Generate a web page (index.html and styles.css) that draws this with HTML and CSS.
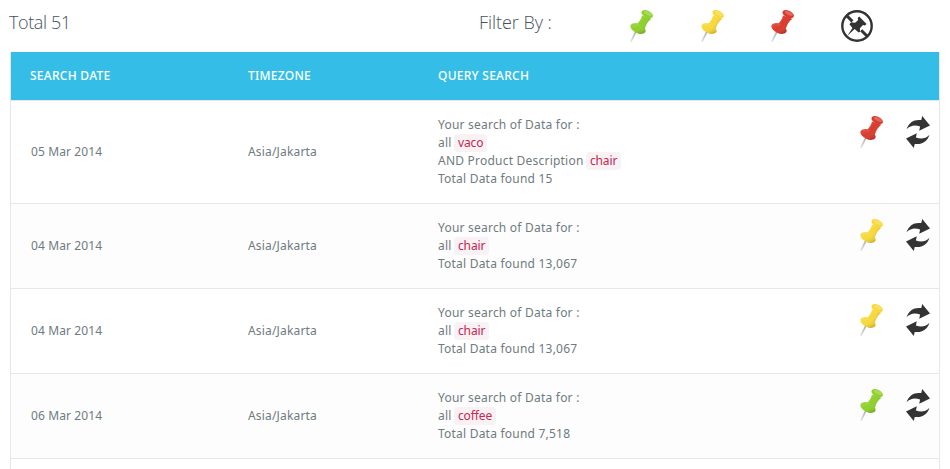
FILE: index.html
```
<!DOCTYPE html>
<html lang="en">
<head>
<meta charset="utf-8">
<title>Search history</title>
<link rel="stylesheet" href="styles.css">
</head>
<body>
<svg class="defs" aria-hidden="true">
  <defs>
    <linearGradient id="needle"><stop offset="0" stop-color="#e4e4e4"/><stop offset="1" stop-color="#aaa"/></linearGradient>
    <linearGradient id="shade" x1="0" y1="0" x2="1" y2=".5"><stop offset="0" stop-color="#fff" stop-opacity=".2"/><stop offset=".55" stop-color="#fff" stop-opacity="0"/><stop offset="1" stop-color="#000" stop-opacity=".18"/></linearGradient>
    <symbol id="pin" viewBox="0 0 24 32">
      <path d="M6.2 21 .8 31.6" stroke="url(#needle)" stroke-width="1.7"/>
      <g fill="currentColor">
        <ellipse cx="8" cy="18.5" rx="8.1" ry="4.6" transform="rotate(25 8 18.5)"/>
        <path d="M12 5.5 C11.8 8 9.5 11.5 6 15 Q9.5 20 15 18.2 C16 14.5 18 11 21.3 8.8Z"/>
        <ellipse cx="17.2" cy="4.1" rx="6.1" ry="3.4" transform="rotate(25 17.2 4.1)"/>
      </g>
      <g fill="url(#shade)">
        <ellipse cx="8" cy="18.5" rx="8.1" ry="4.6" transform="rotate(25 8 18.5)"/>
        <path d="M12 5.5 C11.8 8 9.5 11.5 6 15 Q9.5 20 15 18.2 C16 14.5 18 11 21.3 8.8Z"/>
      </g>
      <ellipse cx="17.9" cy="3.4" rx="4.4" ry="1.8" transform="rotate(25 17.9 3.4)" fill="#fff" opacity=".22"/>
    </symbol>
    <symbol id="redo" viewBox="0 0 24 32">
      <g fill="#333">
        <path d="M.5 13.3 C3 6 8.5 3 15.3 4.1 L16.2 0 24 9.6 13.2 14.7 14.1 10.5 C9 8.6 4.5 9.2 .5 13.3Z"/>
        <path transform="rotate(180 12 16)" d="M.5 13.3 C3 6 8.5 3 15.3 4.1 L16.2 0 24 9.6 13.2 14.7 14.1 10.5 C9 8.6 4.5 9.2 .5 13.3Z"/>
      </g>
    </symbol>
  </defs>
</svg>
<header class="toolbar">
  <div class="total">Total 51</div>
  <div class="filter">Filter By :</div>
  <nav class="filters">
    <svg class="pin green"><use href="#pin"/></svg>
    <svg class="pin yellow"><use href="#pin"/></svg>
    <svg class="pin red"><use href="#pin"/></svg>
    <svg class="unpin" viewBox="0 0 32 32">
      <circle cx="16" cy="16" r="14.7" fill="none" stroke="#333" stroke-width="2.4"/>
      <path d="M6 6 11.4 11.4M20.2 20.2 26 26" stroke="#333" stroke-width="3"/>
      <path d="M18.2 6.6 25.6 14 23.9 15.4 22 15 18.9 18.2 19.1 21.7 17.6 22.6 13.6 18.9 6.2 26 11.4 18 8.4 14.2 10 12.3 14.2 12.7 17.1 10 16.7 8Z" fill="#333"/>
    </svg>
  </nav>
</header>
<main class="table">
  <div class="row head"><span>SEARCH DATE</span><span>TIMEZONE</span><span>QUERY SEARCH</span></div>
  <div class="row">
    <span class="date">05 Mar 2014</span><span class="zone">Asia/Jakarta</span>
    <div class="query"><div>Your search of Data for :</div><div>all <code>vaco</code></div><div>AND Product Description <code>chair</code></div><div>Total Data found 15</div></div>
    <div class="actions"><svg class="pin red"><use href="#pin"/></svg><svg class="redo"><use href="#redo"/></svg></div>
  </div>
  <div class="row alt">
    <span class="date">04 Mar 2014</span><span class="zone">Asia/Jakarta</span>
    <div class="query"><div>Your search of Data for :</div><div>all <code>chair</code></div><div>Total Data found 13,067</div></div>
    <div class="actions"><svg class="pin yellow"><use href="#pin"/></svg><svg class="redo"><use href="#redo"/></svg></div>
  </div>
  <div class="row">
    <span class="date">04 Mar 2014</span><span class="zone">Asia/Jakarta</span>
    <div class="query"><div>Your search of Data for :</div><div>all <code>chair</code></div><div>Total Data found 13,067</div></div>
    <div class="actions"><svg class="pin yellow"><use href="#pin"/></svg><svg class="redo"><use href="#redo"/></svg></div>
  </div>
  <div class="row alt">
    <span class="date">06 Mar 2014</span><span class="zone">Asia/Jakarta</span>
    <div class="query"><div>Your search of Data for :</div><div>all <code>coffee</code></div><div>Total Data found 7,518</div></div>
    <div class="actions"><svg class="pin green"><use href="#pin"/></svg><svg class="redo"><use href="#redo"/></svg></div>
  </div>
</main>
</body>
</html>
```
FILE: styles.css
```
* { box-sizing: border-box; }
body {
  margin: 0;
  height: 469px;
  overflow: hidden;
  display: flex;
  flex-direction: column;
  background: #fff;
  color: #6f7b7e;
  font: 12px/18px "Noto Sans", "Open Sans", sans-serif;
}
svg { display: block; flex: none; overflow: visible; }
.defs { width: 0; height: 0; }
.toolbar {
  height: 52px;
  flex: none;
  display: grid;
  grid-template-columns: 470px 151px 1fr;
  padding-left: 9px;
  color: #45535c;
  font: 300 18px/24px "Open Sans", "Noto Sans", sans-serif;
}
.total, .filter { padding-top: 10px; }
.total { letter-spacing: -0.4px; }
.filter { letter-spacing: -0.05px; }
.filters { display: flex; padding-top: 10px; gap: 46.5px; }
.pin { width: 24px; height: 32px; }
.green { color: #8fd02b; }
.yellow { color: #f8d83a; }
.red { color: #da3a2c; }
.unpin { width: 32px; height: 32px; margin-left: -1px; }
.table {
  flex: 1;
  margin: 0 10px;
  border: solid #e7e7e7;
  border-width: 0 1px;
}
.row {
  display: grid;
  grid-template-columns: 217px 190px 422px 1fr;
  align-items: center;
  padding: 15px 0 15px 20px;
  border-bottom: 1px solid #e7e7e7;
}
.alt { background: #fdfdfd; }
.date { letter-spacing: 0.1px; }
.zone { letter-spacing: 0.18px; }
.query { letter-spacing: 0.22px; }
.head {
  height: 49px;
  padding: 0 0 0 19px;
  grid-template-columns: 218px 190px 1fr;
  background: #34bee7;
  color: #fff;
  font-weight: 500;
  letter-spacing: 0.27px;
}
.actions { align-self: start; display: flex; gap: 22px; }
.redo { width: 24px; height: 32px; }
code {
  display: inline-block;
  height: 18px;
  margin-left: -1px;
  padding: 0 4px;
  border-radius: 4px;
  background: #f8f2f5;
  color: #c7254e;
  font: inherit;
  letter-spacing: -0.1px;
}
```
